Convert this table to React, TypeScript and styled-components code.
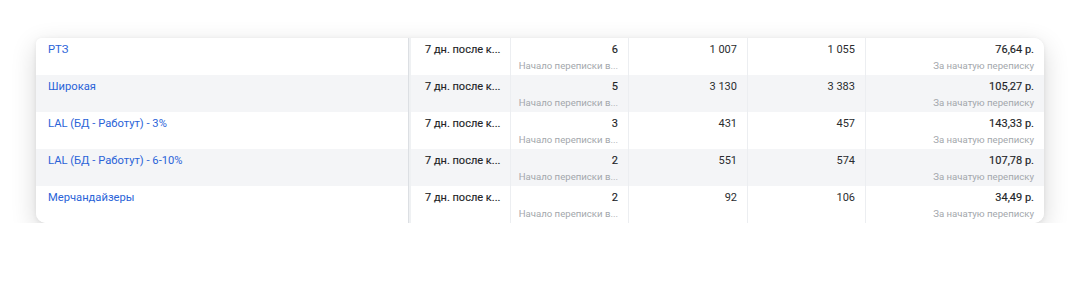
import styled, { createGlobalStyle } from 'styled-components';

const GlobalStyle = createGlobalStyle`
  html, body {
    margin: 0;
    padding: 0;
    background: #ffffff;
    font-family: Roboto, "Noto Sans", Arial, sans-serif;
  }
`;

const Card = styled.div`
  margin: 38px 0 0 36px;
  width: 1008px;
  background: #ffffff;
  border-radius: 6px 10px 10px 10px;
  box-shadow: 0 8px 26px rgba(0, 0, 0, 0.16), 0 1px 5px rgba(0, 0, 0, 0.07);
  overflow: hidden;
`;

const Row = styled.div<{ $striped?: boolean }>`
  display: grid;
  grid-template-columns: 373px 102px 118px 119px 118px 178px;
  height: 37px;
  background: ${(p) => (p.$striped ? '#f4f5f7' : '#ffffff')};
`;

const Cell = styled.div<{ $align?: 'left' | 'right' }>`
  display: flex;
  flex-direction: column;
  align-items: ${(p) => (p.$align === 'right' ? 'flex-end' : 'flex-start')};
  padding: 4px 10px 0 12px;
  border-right: 1px solid #eceef1;
  box-sizing: border-box;
  min-width: 0;
  &:last-child {
    border-right: none;
  }
`;

const NameCell = styled(Cell)`
  border-right: 1px solid #dcdfe3;
  box-shadow: 2px 0 0 #eff1f3;
`;

const GoalCell = styled(Cell)`
  padding-left: 14px;
  margin-left: 2px;
`;

const Name = styled.a`
  font-size: 11.2px;
  line-height: 16px;
  color: #2a63d8;
  text-decoration: none;
  white-space: nowrap;
`;

const Value = styled.span`
  font-size: 11px;
  line-height: 16px;
  color: #222427;
  font-weight: 400;
  -webkit-text-stroke: 0.15px #222427;
  white-space: nowrap;
`;

const Plain = styled(Value)`
  -webkit-text-stroke: 0;
  color: #2b2d30;
`;

const Sub = styled.span`
  font-size: 9.6px;
  line-height: 16px;
  color: #a3a7ac;
  white-space: nowrap;
`;

type Item = {
  name: string;
  results: number;
  reach: string;
  impressions: string;
  cost: string;
};

const rows: Item[] = [
  { name: 'РТЗ', results: 6, reach: '1 007', impressions: '1 055', cost: '76,64 р.' },
  { name: 'Широкая', results: 5, reach: '3 130', impressions: '3 383', cost: '105,27 р.' },
  { name: 'LAL (БД - Работут) - 3%', results: 3, reach: '431', impressions: '457', cost: '143,33 р.' },
  { name: 'LAL (БД - Работут) - 6-10%', results: 2, reach: '551', impressions: '574', cost: '107,78 р.' },
  { name: 'Мерчандайзеры', results: 2, reach: '92', impressions: '106', cost: '34,49 р.' },
];

export default function App() {
  return (
    <>
      <GlobalStyle />
      <Card>
        {rows.map((r, i) => (
          <Row key={r.name} $striped={i % 2 === 1}>
            <NameCell>
              <Name href="#">{r.name}</Name>
            </NameCell>
            <GoalCell>
              <Value>7 дн. после к...</Value>
            </GoalCell>
            <Cell $align="right">
              <Value>{r.results}</Value>
              <Sub>Начало переписки в...</Sub>
            </Cell>
            <Cell $align="right">
              <Plain>{r.reach}</Plain>
            </Cell>
            <Cell $align="right">
              <Plain>{r.impressions}</Plain>
            </Cell>
            <Cell $align="right">
              <Value>{r.cost}</Value>
              <Sub>За начатую переписку</Sub>
            </Cell>
          </Row>
        ))}
      </Card>
    </>
  );
}
